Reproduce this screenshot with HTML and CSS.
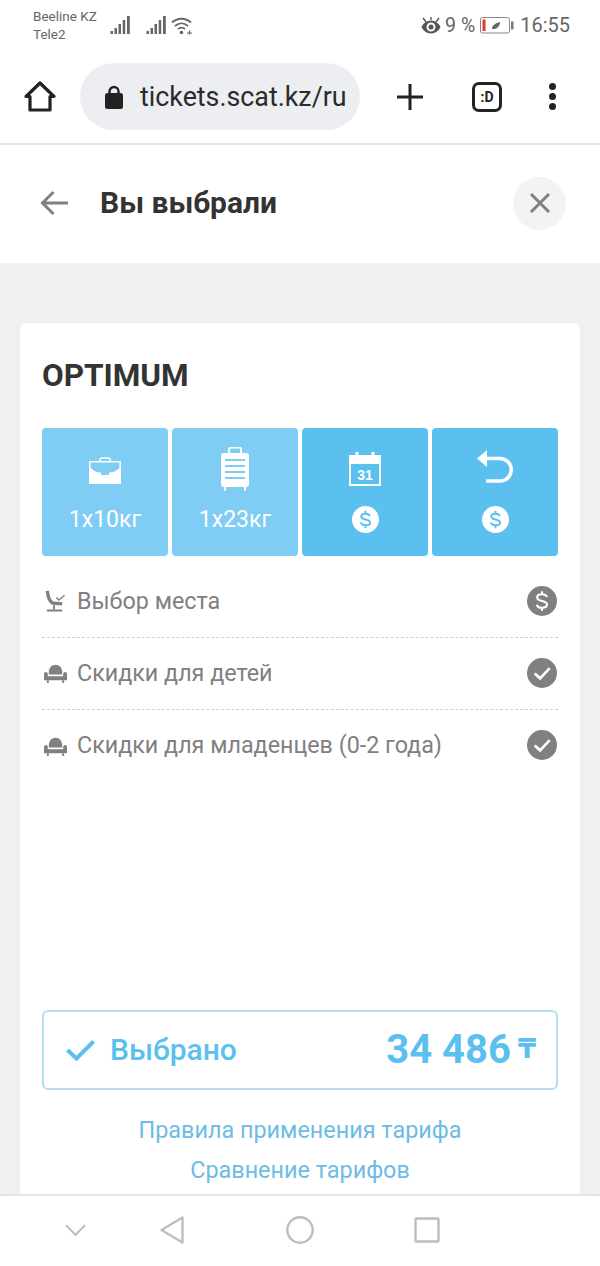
FILE: index.html
```html
<!DOCTYPE html>
<html lang="ru">
<head>
    <meta charset="UTF-8">
    <meta name="viewport" content="width=device-width, initial-scale=1.0">
    <title>Вы выбрали</title>
    <link rel="stylesheet" href="styles.css">
</head>
<body>

    <div class="page">
        <!-- Phone status bar -->
        <div class="status-bar">
            <div class="carriers">
                <span>Beeline KZ</span>
                <span>Tele2</span>
            </div>
            <svg class="signal signal-first" viewBox="0 0 20 18"><path d="M.5 15h2.500v3H.5zM4.500 12H7v6H4.500zM8.500 8H11v10H8.500zM12.700 4h2.500v14h-2.500zM17 0h2.800v18H17z"/></svg>
            <svg class="signal signal-second" viewBox="0 0 20 18"><path d="M.5 15h2.500v3H.5zM4.500 12H7v6H4.500zM8.500 8H11v10H8.500zM12.700 4h2.500v14h-2.500zM17 0h2.800v18H17z"/></svg>
            <svg class="wifi" viewBox="0 0 22 19" fill="none" stroke="#666" stroke-width="1.800">
                <path d="M1 6.500C6.500 1.500 14.500 1.500 20 6.500"/>
                <path d="M4 10C8 6.500 13 6.500 17 10"/>
                <path d="M7 13c2.200-1.800 4.800-1.800 7 0"/>
                <circle cx="10.500" cy="16.500" r="1.800" fill="#666" stroke="none"/>
                <path d="M16 17h5M18.500 14.500v4" stroke-width="1.200"/>
            </svg>
            <div class="status-right">
                <svg class="eye" viewBox="0 0 20 17"><path d="M10 3.500C5.500 3.500 2 6.500.5 10 2 13.500 5.500 16.500 10 16.500s8-3 9.500-6.500C18 6.500 14.500 3.500 10 3.500zm0 11a4.500 4.500 0 1 1 0-9 4.500 4.500 0 0 1 0 9z"/><circle cx="10" cy="10" r="2.500"/><path d="M2 1l3 4M18 1l-3 4M10 0v3" stroke="#555" stroke-width="1.400"/></svg>
                <span class="battery-pct">9 %</span>
                <svg class="battery" viewBox="0 0 34 17">
                    <rect x=".5" y=".5" width="29" height="15.500" rx="2" fill="#fff" stroke="#888"/>
                    <rect x="2.500" y="2.500" width="3" height="11.500" fill="#e53935"/>
                    <path d="M12 12c0-4 4-6 8-7 0 4-3 7-6 7z" fill="#666"/>
                    <rect x="31" y="4.500" width="2.500" height="8" fill="#777"/>
                </svg>
                <span class="clock">16:55</span>
            </div>
        </div>

        <!-- Browser toolbar -->
        <div class="toolbar">
            <svg class="tool-home" viewBox="0 0 32 32" fill="none" stroke="#222" stroke-width="3.200" stroke-linejoin="round"><path d="M2 15.500L16 2l14 13.500h-4V29H6V15.500z"/></svg>
            <div class="url-pill">
                <svg class="lock" viewBox="0 0 18 24"><path d="M4.500 9V6.500a4.500 4.500 0 0 1 9 0V9" fill="none" stroke="#222" stroke-width="2.400"/><rect y="8" width="18" height="16" rx="2.500" fill="#222"/></svg>
                <span class="url-text">tickets.scat.kz/ru</span>
            </div>
            <svg class="tool-plus" viewBox="0 0 28 28" stroke="#222" stroke-width="3"><path d="M14 1v26M1 14h26"/></svg>
            <div class="tab-count">:D</div>
            <div class="tool-dots"><i></i><i></i><i></i></div>
        </div>

        <!-- Page header -->
        <header class="header">
            <svg class="back" viewBox="0 0 28 26" fill="none" stroke="#808080" stroke-width="3"><path d="M28 13H3M13.500 2L2.500 13l11 11"/></svg>
            <h1>Вы выбрали</h1>
            <button class="close" type="button">
                <svg viewBox="0 0 22 22" fill="none" stroke="#808080" stroke-width="3"><path d="M2 2l18 18M20 2L2 20"/></svg>
            </button>
        </header>

        <main class="content">
            <section class="card">
                <h2>OPTIMUM</h2>

                <div class="tiles">
                    <div class="tile tile-light">
                        <svg class="icon-case" viewBox="0 0 32 28" fill="#fff">
                            <path d="M11 4V2.500A2 2 0 0 1 13 1h6a2 2 0 0 1 2 2V4" fill="none" stroke="#fff" stroke-width="1.500"/>
                            <path d="M.8 4.800h30.400V20H.8z" fill="none" stroke="#fff" stroke-width="1.500"/>
                            <path d="M0 9c4 5 8 6.500 12 6.500V18h8v-2.500c4 0 8-1.500 12-6.500v17a1 1 0 0 1-1 1H1a1 1 0 0 1-1-1z"/>
                        </svg>
                        <span class="tile-label">1х10кг</span>
                    </div>
                    <div class="tile tile-light">
                        <svg class="icon-suitcase" viewBox="0 0 28 44" fill="#fff">
                            <path d="M8 6V2.500A2 2 0 0 1 10 .5h8a2 2 0 0 1 2 2V6" fill="none" stroke="#fff" stroke-width="2"/>
                            <path d="M3 6h22a3 3 0 0 1 3 3v28a3 3 0 0 1-3 3v3a1 1 0 0 1-2 0v-3H5v3a1 1 0 0 1-2 0v-3a3 3 0 0 1-3-3V9a3 3 0 0 1 3-3z"/>
                            <path d="M4 13h20M4 19h20M4 25h20M4 31h20" stroke="#7fcdf4" stroke-width="2"/>
                        </svg>
                        <span class="tile-label">1х23кг</span>
                    </div>
                    <div class="tile tile-dark">
                        <svg class="icon-calendar" viewBox="0 0 32 34">
                            <rect x="1" y="4" width="30" height="29" fill="none" stroke="#fff" stroke-width="2"/>
                            <path d="M1 4h30v8H1z" fill="#fff"/>
                            <path d="M8 0v5M24 0v5" stroke="#fff" stroke-width="3"/>
                            <text class="cal-day" x="16" y="28" text-anchor="middle">31</text>
                        </svg>
                        <svg class="coin" viewBox="0 0 28 28">
                            <circle cx="14" cy="14" r="14" fill="#fff"/>
                            <path d="M18.500 10.500C18 8.500 16 8 14 8s-4.500.8-4.500 3S11.500 13.500 14 14s4.800 1 4.800 3.300S16.300 20 14 20s-4.300-.8-4.800-2.800M14 5v3M14 20v3" fill="none" stroke="#5bbfef" stroke-width="2"/>
                        </svg>
                    </div>
                    <div class="tile tile-dark">
                        <svg class="icon-return" viewBox="0 0 36 34" fill="none" stroke="#fff" stroke-width="3.500">
                            <path d="M8 9.500h15a11.250 11.250 0 0 1 0 22.500H9"/>
                            <path d="M0 9.500L10 1v17z" fill="#fff" stroke="none"/>
                        </svg>
                        <svg class="coin" viewBox="0 0 28 28">
                            <circle cx="14" cy="14" r="14" fill="#fff"/>
                            <path d="M18.500 10.500C18 8.500 16 8 14 8s-4.500.8-4.500 3S11.500 13.500 14 14s4.800 1 4.800 3.300S16.300 20 14 20s-4.300-.8-4.800-2.800M14 5v3M14 20v3" fill="none" stroke="#5bbfef" stroke-width="2"/>
                        </svg>
                    </div>
                </div>

                <ul class="options">
                    <li class="option">
                        <svg class="option-icon" viewBox="0 0 24 24" fill="none" stroke="#808080">
                            <path d="M3.500 2c.5 5 2 10.500 5 12.500 3 1 7 .5 10.500 1" stroke-width="3.600"/>
                            <path d="M10.500 17v4M3 22.500h16" stroke-width="2"/>
                            <path d="M13 9l2.500 2.500L21.500 6.500" stroke-width="1.500"/>
                        </svg>
                        <span class="option-name">Выбор места</span>
                        <svg class="status-icon" viewBox="0 0 31 31">
                            <circle cx="15.500" cy="15.500" r="15.500" fill="#808080"/>
                            <path d="M20.500 11.500C20 9 18 8.500 15.500 8.500s-5 1-5 3.300 2.300 3 5 3.700 5.200 1.300 5.200 3.700-2.700 3.300-5.200 3.300-4.800-.8-5.300-3.200M15.500 5.500v3M15.500 22.500v3" fill="none" stroke="#fff" stroke-width="2.200"/>
                        </svg>
                    </li>
                    <li class="option">
                        <svg class="option-icon" viewBox="0 0 24 24" fill="#808080">
                            <path d="M5 12C5 7 8 4 12 4s7 3 7 8v2H5z"/>
                            <path d="M0 13.500a2 2 0 0 1 4 0V16h16v-2.500a2 2 0 0 1 4 0V20H0z"/>
                            <path d="M3 20h2v3H3zM19 20h2v3h-2z"/>
                        </svg>
                        <span class="option-name">Скидки для детей</span>
                        <svg class="status-icon" viewBox="0 0 31 31">
                            <circle cx="15.500" cy="15.500" r="15.500" fill="#808080"/>
                            <path d="M8 16l5.500 5L23.500 10.500" fill="none" stroke="#fff" stroke-width="2.800"/>
                        </svg>
                    </li>
                    <li class="option">
                        <svg class="option-icon" viewBox="0 0 24 24" fill="#808080">
                            <path d="M5 12C5 7 8 4 12 4s7 3 7 8v2H5z"/>
                            <path d="M0 13.500a2 2 0 0 1 4 0V16h16v-2.500a2 2 0 0 1 4 0V20H0z"/>
                            <path d="M3 20h2v3H3zM19 20h2v3h-2z"/>
                        </svg>
                        <span class="option-name">Скидки для младенцев (0-2 года)</span>
                        <svg class="status-icon" viewBox="0 0 31 31">
                            <circle cx="15.500" cy="15.500" r="15.500" fill="#808080"/>
                            <path d="M8 16l5.500 5L23.500 10.500" fill="none" stroke="#fff" stroke-width="2.800"/>
                        </svg>
                    </li>
                </ul>

                <div class="selected">
                    <svg class="selected-check" viewBox="0 0 29 22" fill="none" stroke="#5bbfef" stroke-width="4"><path d="M1.500 11l9 8.500L27.500 2.500"/></svg>
                    <span class="selected-name">Выбрано</span>
                    <span class="selected-price">34 486</span>
                    <span class="selected-currency">₸</span>
                </div>

                <div class="links">
                    <a href="#">Правила применения тарифа</a>
                    <a href="#">Сравнение тарифов</a>
                </div>
            </section>
        </main>

        <!-- Android navigation bar -->
        <nav class="nav-bar">
            <svg class="nav-chevron" viewBox="0 0 22 13" fill="none" stroke="#bdbdbd" stroke-width="2"><path d="M1 1l10 10L21 1"/></svg>
            <svg class="nav-back" viewBox="0 0 24 28" fill="none" stroke="#bdbdbd" stroke-width="2.400" stroke-linejoin="round"><path d="M22.500 1.500v25L1.500 14z"/></svg>
            <svg class="nav-home" viewBox="0 0 28 28" fill="none" stroke="#bdbdbd" stroke-width="2.400"><circle cx="14" cy="14" r="12.700"/></svg>
            <svg class="nav-recent" viewBox="0 0 26 26" fill="none" stroke="#bdbdbd" stroke-width="2.400" stroke-linejoin="round"><rect x="1.500" y="1.500" width="23" height="23" rx="1"/></svg>
        </nav>
    </div>

</body>
</html>
```

FILE: styles.css
```css
/* General page styles */
* {
    box-sizing: border-box;
}
body {
    margin: 0;
    font-family: Roboto, "Noto Sans", sans-serif;
    background-color: #fff;
    color: #333;
}
svg {
    display: block;
    flex-shrink: 0;
}
.page {
    display: flex;
    flex-direction: column;
    width: 600px;
    height: 1266px;
    overflow: hidden;
}

/* Status bar */
.status-bar {
    display: flex;
    align-items: center;
    height: 50px;
    padding: 0 30px 0 33px;
    color: #666;
}
.carriers {
    display: flex;
    flex-direction: column;
    width: 77px;
    font-size: 13.500px;
    line-height: 18px;
}
.signal {
    width: 20px;
    height: 18px;
    fill: #666;
}
.signal-second {
    margin-left: 16px;
}
.wifi {
    width: 22px;
    height: 19px;
    margin-left: 5px;
}
.status-right {
    display: flex;
    align-items: center;
    margin-left: auto;
}
.eye {
    width: 20px;
    height: 17px;
    fill: #555;
}
.battery-pct {
    margin-left: 4px;
    font-size: 19.500px;
}
.battery {
    width: 34px;
    height: 17px;
    margin-left: 5px;
}
.clock {
    margin-left: 6px;
    font-size: 20px;
}

/* Browser toolbar */
.toolbar {
    display: flex;
    align-items: center;
    height: 95px;
    padding: 0 32px 0 24px;
    border-bottom: 2px solid #e4e4e4;
}
.tool-home {
    width: 32px;
    height: 32px;
}
.url-pill {
    display: flex;
    align-items: center;
    width: 280px;
    height: 67px;
    margin-left: 24px;
    padding-left: 25px;
    border-radius: 34px;
    background-color: #eceef1;
}
.lock {
    width: 18px;
    height: 24px;
}
.url-text {
    margin-left: 17px;
    font-size: 26.800px;
    color: #2b2b2b;
    white-space: nowrap;
}
.tool-plus {
    width: 28px;
    height: 28px;
    margin-left: 36px;
}
.tab-count {
    display: flex;
    align-items: center;
    justify-content: center;
    flex-shrink: 0;
    width: 30px;
    height: 30px;
    margin-left: 48px;
    border: 3px solid #222;
    border-radius: 7px;
    font-size: 14px;
    font-weight: 700;
    color: #222;
}
.tool-dots {
    display: flex;
    flex-direction: column;
    flex-shrink: 0;
    gap: 3px;
    margin-left: 47px;
}
.tool-dots i {
    display: block;
    width: 7px;
    height: 7px;
    border-radius: 50%;
    background-color: #222;
}

/* Page header */
.header {
    display: flex;
    align-items: center;
    height: 118px;
    padding: 0 34px 2px 40px;
}
.back {
    width: 28px;
    height: 26px;
}
.header h1 {
    margin: 0 0 1px 32px;
    font-size: 30px;
    font-weight: 700;
    color: #333;
}
.close {
    display: flex;
    align-items: center;
    justify-content: center;
    width: 53px;
    height: 53px;
    margin-left: auto;
    padding: 0;
    border: 0;
    border-radius: 50%;
    background-color: #f3f3f3;
}
.close svg {
    width: 22px;
    height: 22px;
}

/* Card */
.content {
    display: flex;
    flex: 1;
    min-height: 0;
    padding: 60px 20px 0;
    background-color: #f1f1f1;
}
.card {
    display: flex;
    flex: 1;
    flex-direction: column;
    padding: 33px 22px 0;
    border-radius: 6px 6px 0 0;
    background-color: #fff;
    box-shadow: 0 2px 8px rgba(0, 0, 0, 0.05);
}
.card h2 {
    margin: 0;
    font-size: 31.500px;
    line-height: 40px;
    font-weight: 700;
    color: #333;
}

/* Tariff tiles */
.tiles {
    display: grid;
    grid-template-columns: repeat(4, 1fr);
    gap: 4px;
    margin-top: 32px;
}
.tile {
    display: flex;
    flex-direction: column;
    align-items: center;
    height: 128px;
    border-radius: 4px;
    color: #fff;
}
.tile-light {
    background-color: #7fcdf4;
}
.tile-dark {
    background-color: #5bbfef;
}
.icon-case {
    width: 32px;
    height: 28px;
    margin-top: 29px;
}
.icon-suitcase {
    width: 28px;
    height: 44px;
    margin-top: 19px;
}
.icon-calendar {
    width: 32px;
    height: 34px;
    margin-top: 24px;
}
.icon-return {
    width: 36px;
    height: 34px;
    margin-top: 21px;
}
.tile-label {
    margin-top: auto;
    margin-bottom: 23px;
    font-size: 23px;
    line-height: 26px;
}
.coin {
    width: 27px;
    height: 27px;
    margin-top: auto;
    margin-bottom: 23px;
}
.cal-day {
    font-family: "Liberation Sans", sans-serif;
    font-size: 14px;
    font-weight: 700;
    fill: #fff;
}

/* Option rows */
.options {
    margin: 10px 0 0;
    padding: 0;
    list-style: none;
}
.option {
    display: flex;
    align-items: center;
    height: 72px;
    padding-bottom: 2px;
    color: #808080;
    border-bottom: 1px dashed #d0d0d0;
}
.option:last-child {
    border-bottom: 0;
}
.option-icon {
    width: 23px;
    height: 23px;
    margin-left: 2px;
}
.option-name {
    margin-left: 10px;
    font-size: 23.300px;
}
.status-icon {
    width: 30px;
    height: 30px;
    margin-left: auto;
    margin-right: 1px;
}

/* Selected fare */
.selected {
    display: flex;
    align-items: center;
    height: 80px;
    margin-top: auto;
    padding: 0 20px 2px 22px;
    border: 2px solid #b7dcf0;
    border-radius: 6px;
    color: #5bbfef;
}
.selected-check {
    width: 29px;
    height: 22px;
    margin-top: 2px;
}
.selected-name {
    margin-left: 15px;
    font-size: 30px;
    font-weight: 500;
}
.selected-price {
    margin-left: auto;
    font-size: 40px;
    font-weight: 700;
}
.selected-currency {
    margin-left: 7px;
    font-family: "DejaVu Sans", sans-serif;
    font-size: 26px;
    font-weight: 700;
}

/* Links under the fare */
.links {
    display: flex;
    flex-direction: column;
    align-items: center;
    gap: 12px;
    margin: 26px 0 10px;
}
.links a {
    font-size: 23.400px;
    line-height: 28px;
    color: #6cbce6;
    text-decoration: none;
}

/* Android navigation bar */
.nav-bar {
    display: flex;
    align-items: center;
    height: 72px;
    padding: 0 0 2px 65px;
    border-top: 2px solid #e4e4e4;
    background-color: #fff;
}
.nav-chevron {
    width: 21px;
    height: 13px;
}
.nav-back {
    width: 24px;
    height: 28px;
    margin-left: 74px;
}
.nav-home {
    width: 28px;
    height: 28px;
    margin-left: 102px;
}
.nav-recent {
    width: 26px;
    height: 26px;
    margin-left: 100px;
}
```
